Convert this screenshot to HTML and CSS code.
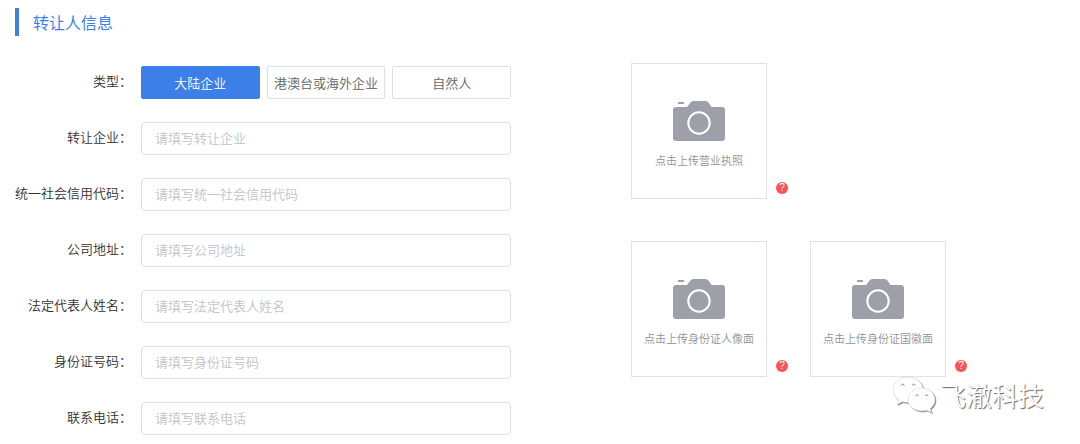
FILE: index.html
```html
<!DOCTYPE html>
<html lang="zh-CN">
<head>
<meta charset="utf-8">
<meta name="viewport" content="width=device-width, initial-scale=1">
<title>转让人信息</title>
<link rel="stylesheet" href="styles.css">
</head>
<body>
<svg class="sprite" aria-hidden="true">
  <symbol id="camera" viewBox="0 0 52 40">
    <rect x="5" y="1" width="6" height="2"/>
    <path d="M3 6H14L17.500 1.500Q18.500 0 20.500 0H32.500Q34.500 0 35.500 1.500L38.500 6H49Q52 6 52 9V37Q52 40 49 40H3Q0 40 0 37V9Q0 6 3 6Z"/>
    <circle cx="26" cy="22" r="10.700" fill="none" stroke="#fff" stroke-width="2"/>
  </symbol>
</svg>
<main class="page">
  <h1 class="title">转让人信息</h1>
  <div class="content">
    <form class="form">
      <div class="row">
        <span class="label" id="type-label">类型：</span>
        <div class="types" role="group" aria-labelledby="type-label">
          <button class="type type-active" type="button" aria-pressed="true">大陆企业</button>
          <button class="type" type="button" aria-pressed="false">港澳台或海外企业</button>
          <button class="type" type="button" aria-pressed="false">自然人</button>
        </div>
      </div>
      <div class="row">
        <label class="label" for="company">转让企业：</label>
        <input class="input" id="company" type="text" placeholder="请填写转让企业">
      </div>
      <div class="row">
        <label class="label" for="code">统一社会信用代码：</label>
        <input class="input" id="code" type="text" placeholder="请填写统一社会信用代码">
      </div>
      <div class="row">
        <label class="label" for="address">公司地址：</label>
        <input class="input" id="address" type="text" placeholder="请填写公司地址">
      </div>
      <div class="row">
        <label class="label" for="name">法定代表人姓名：</label>
        <input class="input" id="name" type="text" placeholder="请填写法定代表人姓名">
      </div>
      <div class="row">
        <label class="label" for="idno">身份证号码：</label>
        <input class="input" id="idno" type="text" placeholder="请填写身份证号码">
      </div>
      <div class="row">
        <label class="label" for="phone">联系电话：</label>
        <input class="input" id="phone" type="tel" placeholder="请填写联系电话">
      </div>
    </form>
    <div class="uploads">
      <div class="upload-row">
        <div class="upload">
          <button class="upload-box" type="button"><svg class="camera"><use href="#camera"/></svg><span>点击上传营业执照</span></button>
          <button class="help" type="button">?</button>
        </div>
      </div>
      <div class="upload-row">
        <div class="upload">
          <button class="upload-box" type="button"><svg class="camera"><use href="#camera"/></svg><span>点击上传身份证人像面</span></button>
          <button class="help" type="button">?</button>
        </div>
        <div class="upload">
          <button class="upload-box" type="button"><svg class="camera"><use href="#camera"/></svg><span>点击上传身份证国徽面</span></button>
          <button class="help" type="button">?</button>
        </div>
      </div>
    </div>
  </div>
  <div class="watermark">
    <svg class="wechat" viewBox="0 0 44 38" aria-hidden="true">
      <g class="bubble">
        <path d="M16 1C7.500 1 1 6.700 1 13.800C1 18 3.300 21.500 6.700 23.900L5 28.500L10.500 25.700C12.300 26.300 14 26.500 16 26.500C24.500 26.500 31 20.900 31 13.800S24.500 1 16 1Z"/>
        <path d="M29.500 12C22 12 16.200 17 16.200 23.500S22 35 29.500 35C31.300 35 33 34.700 34.700 34.200L39.500 36.500L38.300 32.500C41.200 30.300 43 27.200 43 23.500C43 17 37 12 29.500 12Z"/>
      </g>
      <path class="eyes" d="M9 9.500Q10.700 6.500 12.500 9.500M20 9.500Q21.700 6.500 23.500 9.500M23.500 20Q25 17.500 26.700 20M33 20Q34.500 17.500 36.200 20"/>
    </svg>
    <span>飞澈科技</span>
  </div>
</main>
</body>
</html>
```
FILE: styles.css
```css
* {
  box-sizing: border-box;
}

body {
  margin: 0;
  background: #fff;
  color: #303133;
  font: 350 13px/20px "Noto Sans CJK SC", sans-serif;
}

button,
input {
  margin: 0;
  font: inherit;
}

.sprite {
  position: absolute;
  width: 0;
  height: 0;
}

.page {
  position: relative;
  padding: 8px 15px 9px;
}

.title {
  margin: 0;
  padding-left: 14px;
  border-left: 4px solid #3d7fe8;
  color: #3d7fe8;
  font-size: 16px;
  font-weight: 400;
  line-height: 28px;
}

.content {
  display: grid;
  grid-template-columns: minmax(0, 496px) auto;
  justify-content: start;
  column-gap: 120px;
  padding-top: 27px;
}

.form {
  display: grid;
  gap: 23px;
  padding-top: 3px;
}

.row {
  display: grid;
  grid-template-columns: 117px minmax(0, 1fr);
  column-gap: 9px;
  align-items: center;
}

.label {
  padding-bottom: 3px;
  text-align: right;
  white-space: nowrap;
}

.types {
  display: grid;
  grid-template-columns: repeat(3, minmax(0, 1fr));
  gap: 7px;
}

.type {
  height: 33px;
  padding: 0;
  border: 1px solid #dcdfe6;
  border-radius: 2px;
  background: #fff;
  color: #606266;
  white-space: nowrap;
}

.type-active {
  border-color: #3d7fe8;
  background: #3d7fe8;
  color: #fff;
}

.input {
  width: 100%;
  height: 33px;
  padding: 0 13px 3px;
  border: 1px solid #dcdfe6;
  border-radius: 4px;
  background: #fff;
  color: #606266;
}

.input::placeholder {
  color: #c0c4cc;
  opacity: 1;
}

.uploads {
  display: grid;
  gap: 42px;
  align-content: start;
}

.upload-row {
  display: flex;
  gap: 22px;
}

.upload {
  display: flex;
  align-items: flex-end;
  gap: 9px;
}

.upload-box {
  display: flex;
  flex-direction: column;
  align-items: center;
  gap: 9px;
  width: 136px;
  height: 136px;
  padding: 37px 0 0;
  border: 1px solid #dfe2e9;
  background: #fff;
  color: #909399;
  font-size: 11px;
  white-space: nowrap;
}

.camera {
  width: 52px;
  height: 40px;
  fill: #9da0a8;
}

.help {
  width: 12px;
  height: 12px;
  margin-bottom: 5px;
  padding: 0;
  border: 0;
  border-radius: 50%;
  background: #fd5255;
  color: #fff;
  font: 10px/12px "Liberation Sans", sans-serif;
}

.watermark {
  position: absolute;
  right: 36px;
  bottom: 30px;
  display: flex;
  align-items: center;
  gap: 4px;
  color: #fff;
  font-size: 26px;
  font-weight: 350;
  line-height: 38px;
  text-shadow: 1px 1px 1px #666;
}

.wechat {
  width: 44px;
  height: 38px;
  filter: drop-shadow(1px 1px 0 #888);
}

.bubble {
  fill: #fff;
  stroke: #ccc;
  stroke-width: 0.500;
}

.eyes {
  fill: none;
  stroke: #888;
  stroke-width: 1;
}
```
